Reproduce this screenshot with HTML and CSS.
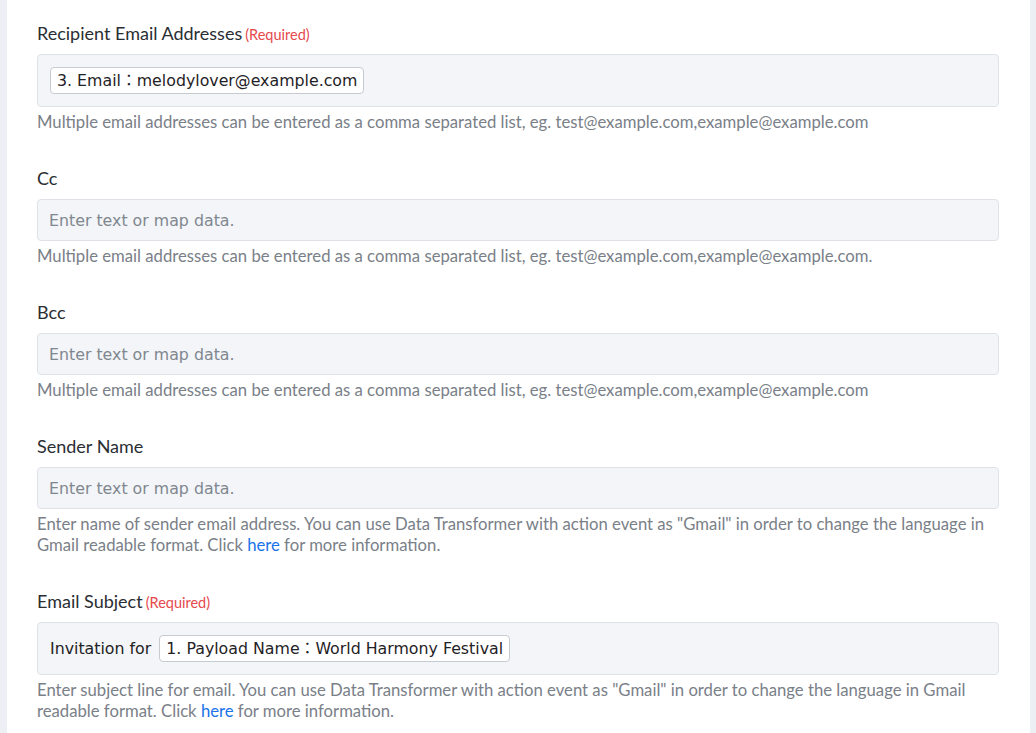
FILE: index.html
```html
<!DOCTYPE html>
<html>
<head>
<meta charset="utf-8">
<link rel="stylesheet" href="styles.css">
</head>
<body>
<div class="panel">
  <div class="field">
    <div class="label">Recipient Email Addresses<span class="req">(Required)</span></div>
    <div class="input tall"><span class="chip">3. Email：melodylover@example.com</span></div>
    <div class="help">Multiple email addresses can be entered as a comma separated list, eg. test@example.com,example@example.com</div>
  </div>
  <div class="field">
    <div class="label">Cc</div>
    <div class="input"><span class="ph">Enter text or map data.</span></div>
    <div class="help">Multiple email addresses can be entered as a comma separated list, eg. test@example.com,example@example.com.</div>
  </div>
  <div class="field">
    <div class="label">Bcc</div>
    <div class="input"><span class="ph">Enter text or map data.</span></div>
    <div class="help">Multiple email addresses can be entered as a comma separated list, eg. test@example.com,example@example.com</div>
  </div>
  <div class="field">
    <div class="label">Sender Name</div>
    <div class="input"><span class="ph">Enter text or map data.</span></div>
    <div class="help">Enter name of sender email address. You can use Data Transformer with action event as "Gmail" in order to change the language in Gmail readable format. Click <a href="#">here</a> for more information.</div>
  </div>
  <div class="field">
    <div class="label">Email Subject<span class="req">(Required)</span></div>
    <div class="input tall"><span class="txt">Invitation for</span><span class="chip">1. Payload Name：World Harmony Festival</span></div>
    <div class="help">Enter subject line for email. You can use Data Transformer with action event as "Gmail" in order to change the language in Gmail readable format. Click <a href="#">here</a> for more information.</div>
  </div>
</div>
</body>
</html>
```
FILE: styles.css
```css
html, body {
  margin: 0;
  padding: 0;
  background: #eceff3;
}
body {
  height: 733px;
  overflow: hidden;
}
.panel {
  margin: 0 6px 0 7px;
  background: #ffffff;
  padding: 21px 31px 0 30px;
  min-height: 733px;
  box-sizing: border-box;
}
.field {
  padding-bottom: 33px;
}
.label {
  font-family: Lato, "Liberation Sans", sans-serif;
  font-size: 18px;
  line-height: 24px;
  height: 24px;
  color: #2a2e33;
  margin-bottom: 9px;
}
.req {
  font-size: 14.5px;
  color: #e5484d;
  margin-left: 3px;
}
.input {
  box-sizing: border-box;
  height: 42px;
  border: 1px solid #dfe3e8;
  border-radius: 4px;
  background: #f3f5f8;
  display: flex;
  align-items: center;
  padding: 0 11px;
  font-family: "DejaVu Sans", "Noto Sans CJK JP", sans-serif;
  font-size: 15.8px;
  color: #222;
}
.input.tall {
  height: 53px;
  padding: 0 12px;
}
.ph {
  color: #80878f;
}
.txt {
  margin-right: 8px;
}
.chip {
  display: inline-block;
  box-sizing: border-box;
  height: 27px;
  line-height: 25px;
  padding: 0 6px;
  border: 1px solid #c6cbd1;
  border-radius: 4px;
  background: #ffffff;
  color: #1f2226;
}
.help {
  font-family: Lato, "Liberation Sans", sans-serif;
  font-size: 16.7px;
  line-height: 21px;
  color: #7a8088;
  margin-top: 5px;
}
.help a {
  color: #1a73e8;
  text-decoration: none;
}
```
